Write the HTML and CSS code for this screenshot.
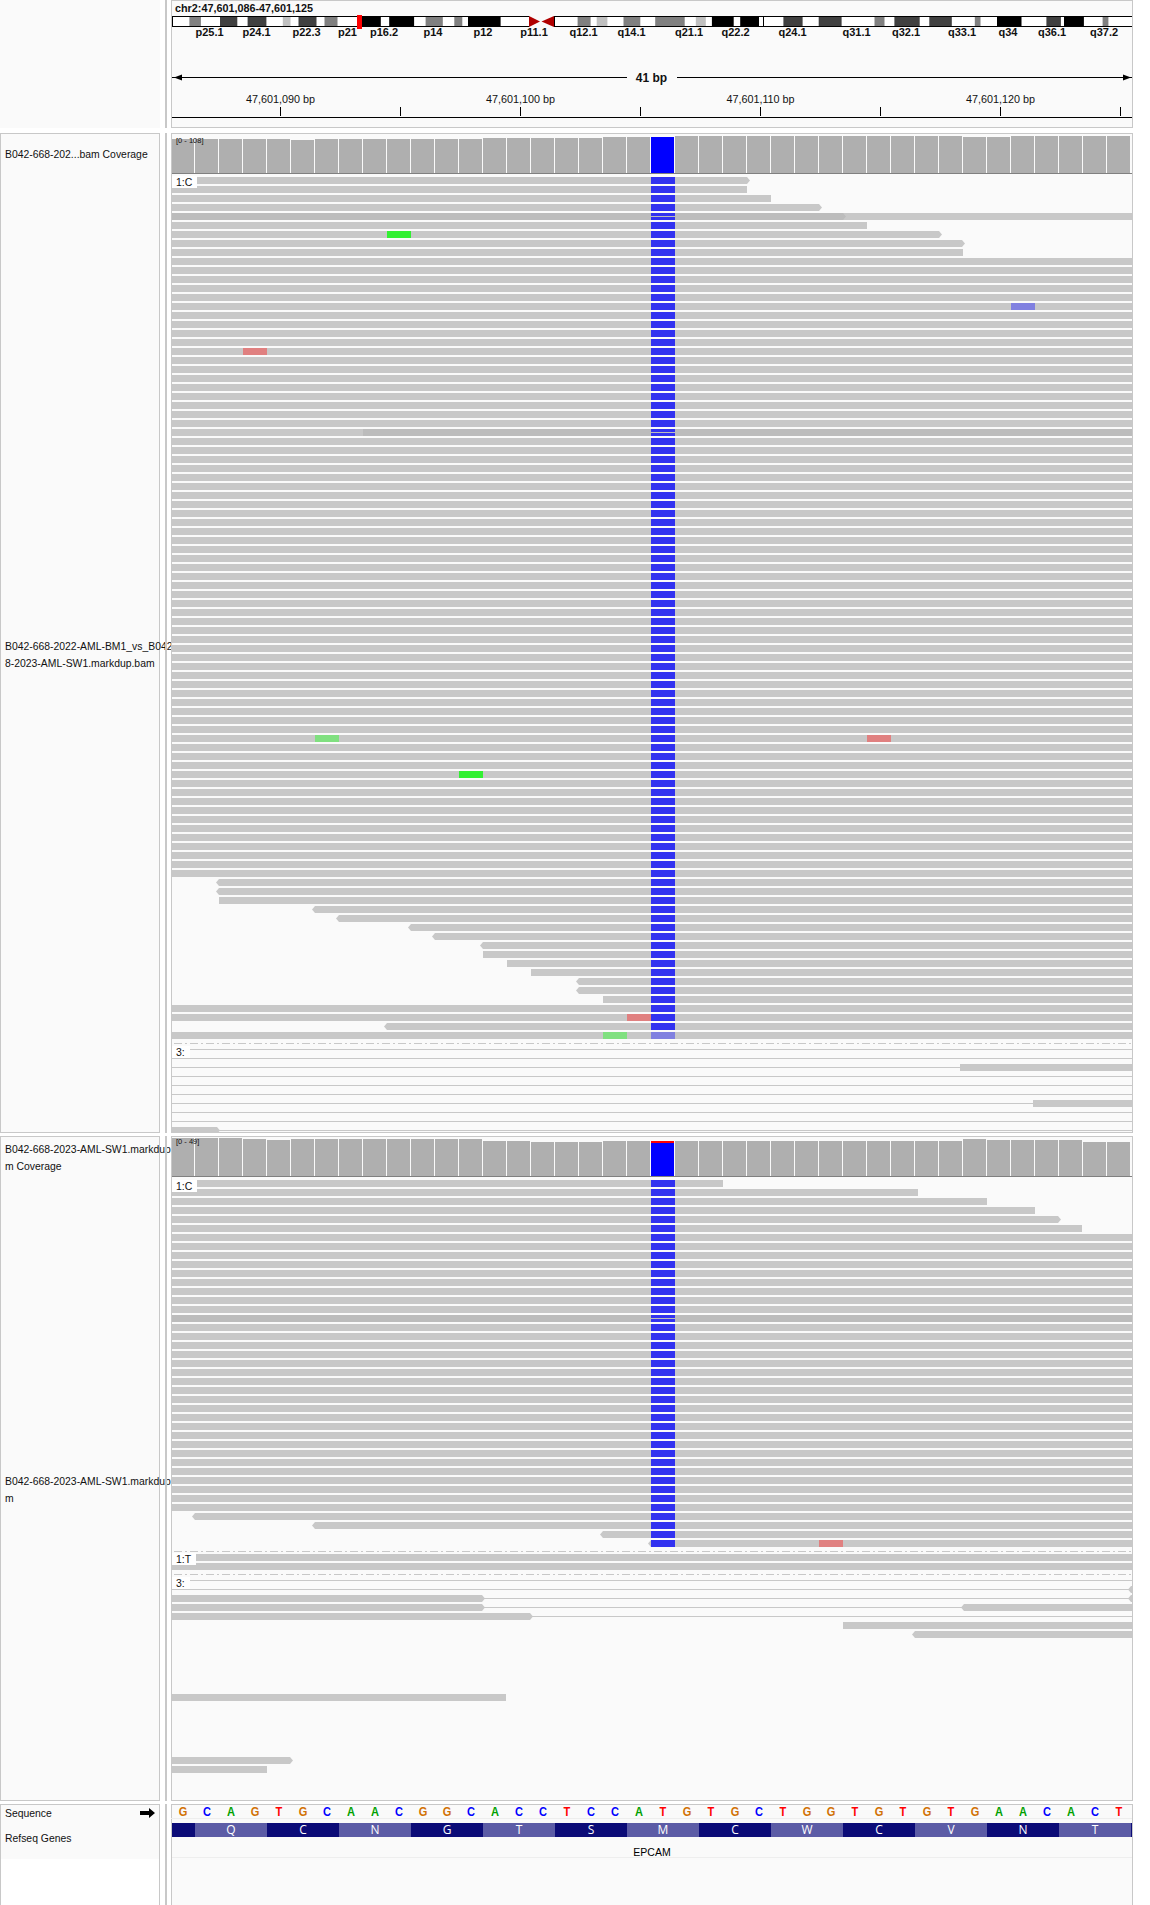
FILE: index.html
```html
<!DOCTYPE html>
<html lang="en">
  <head>
    <meta charset="UTF-8" />
    <title>IGV - EPCAM</title>
    <link rel="stylesheet" href="styles.css">
  </head>
  <body>
    <!-- Locus header: ideogram, scale and ruler -->
    <div class="row row-header">
      <div class="names names-plain"></div>
      <div class="divider"></div>
      <div class="data">
        <div class="locus">chr2:47,601,086-47,601,125</div>
        <svg id="header-track" class="canvas" width="960" height="112" viewBox="172 15 960 112"></svg>
      </div>
    </div>

    <!-- First sample -->
    <div class="row row-sample-one">
      <div class="names">
        <div class="name name-coverage">B042-668-202...bam Coverage</div>
        <div class="name name-reads">B042-668-2022-AML-BM1_vs_B042<br>8-2023-AML-SW1.markdup.bam</div>
      </div>
      <div class="divider"></div>
      <div class="data">
        <svg id="sample-one" class="canvas" width="960" height="998" viewBox="172 134 960 998"></svg>
      </div>
    </div>

    <!-- Second sample -->
    <div class="row row-sample-two">
      <div class="names">
        <div class="name name-coverage">B042-668-2023-AML-SW1.markdup<br>m Coverage</div>
        <div class="name name-reads">B042-668-2023-AML-SW1.markdup<br>m</div>
      </div>
      <div class="divider"></div>
      <div class="data">
        <svg id="sample-two" class="canvas" width="960" height="663" viewBox="172 1137 960 663"></svg>
      </div>
    </div>

    <!-- Sequence and genes -->
    <div class="row row-genes">
      <div class="names names-genes">
        <div class="gene-names">
          <div class="name-sequence">
            <span>Sequence</span>
            <svg class="strand-arrow" width="15" height="10" viewBox="0 0 15 10">
              <path d="M0 3H9V0L15 5L9 10V7H0Z" />
            </svg>
          </div>
          <div class="name-refseq">Refseq Genes</div>
        </div>
      </div>
      <div class="divider"></div>
      <div class="data">
        <div id="sequence" class="sequence"></div>
        <div id="codons" class="codons"></div>
        <div class="gene">EPCAM</div>
      </div>
    </div>

    <script src="track.js"></script>
  </body>
</html>
```

FILE: styles.css
```css
body {
  margin: 0;
  width: 1150px;
  height: 1905px;
  overflow: hidden;
  background-color: #fff;
  font-family: "Liberation Sans", Arial, sans-serif;
  font-size: 10.4px;
  color: #111;
}

.row {
  display: flex;
}
.row-header {
  height: 128px;
  margin-bottom: 5px;
}
.row-sample-one {
  height: 1000px;
  margin-bottom: 3px;
}
.row-sample-two {
  height: 665px;
  margin-bottom: 3px;
}
.row-genes {
  height: 101px;
}
.row-genes .data {
  border-bottom: none;
}
.row-genes .names {
  border-bottom: none;
}

.names {
  box-sizing: border-box;
  width: 160px;
  border: 1px solid #c8c8c8;
  background-color: #fafafa;
  display: flex;
  flex-direction: column;
}
.names-plain {
  border: none;
}
.names-genes {
  background-color: #fff;
}

.name {
  box-sizing: border-box;
  padding-left: 4px;
  white-space: nowrap;
  line-height: 17px;
  display: flex;
  align-items: center;
}
.name-coverage {
  height: 40px;
  padding-top: 1px;
}
.name-reads {
  flex: 1;
  padding-top: 3px;
}

.gene-names {
  box-sizing: border-box;
  height: 54px;
  background-color: #fafafa;
  padding: 3px 4px 0;
}
.name-sequence {
  display: flex;
  justify-content: space-between;
  align-items: center;
  height: 10px;
}
.strand-arrow {
  fill: #000;
}
.name-refseq {
  margin-top: 15px;
}

.divider {
  width: 2px;
  margin: 0 4px 0 5px;
  background-color: #c8c8c8;
}

/* position: relative so the panel paints over long sample names */
.data {
  position: relative;
  box-sizing: border-box;
  width: 962px;
  border: 1px solid #c8c8c8;
  background-color: #fafafa;
}

.canvas {
  display: block;
}
.canvas text {
  font-family: "Liberation Sans", Arial, sans-serif;
  fill: #111;
}
.crisp {
  shape-rendering: crispEdges;
}

.locus {
  height: 14px;
  line-height: 14px;
  padding-left: 3px;
  font-size: 10.8px;
  font-weight: bold;
}

/* ideogram */
.band-white { fill: #fff; }
.band-black { fill: #000; }
.band-dark { fill: #404040; }
.band-gray { fill: #808080; }
.band-light { fill: #c0c0c0; }
.band-mark { fill: #f00; }
.centromere { fill: #b00000; }
.outline { fill: none; stroke: #000; stroke-width: 1; }
.canvas text.cyto-label { font-size: 11px; font-weight: bold; text-anchor: middle; }

/* scale and ruler */
.ink { fill: #000; }
.scale-gap { fill: #fafafa; }
.canvas text.scale-label { font-size: 12px; font-weight: bold; text-anchor: middle; }
.canvas text.ruler-label { font-size: 10.8px; text-anchor: middle; }

/* coverage */
.cov { fill: #afafaf; }
.cov-blue { fill: #00f; }
.cov-red { fill: #f00; }
.cov-base { fill: #808080; }
.canvas text.range-label { font-size: 7.5px; }

/* reads */
.read { fill: #c8c8c8; }
.read-dark { fill: #bcbcbc; }
.mis-blue { fill: #3232f0; }
.mis-blue-faint { fill: #8080e0; }
.mis-green { fill: #32f032; }
.mis-green-faint { fill: #80e080; }
.mis-red-faint { fill: #e08080; }
.mate-line { fill: #c8c8c8; }
.group-line { stroke: #c8c8c8; stroke-width: 1; stroke-dasharray: 8 3 2 3; }
.group-tag { fill: #fff; }
.canvas text.group-label { font-size: 10.5px; }

/* sequence and genes */
.sequence {
  display: flex;
  height: 13px;
  margin-left: -1px;
  border-bottom: 1px solid #eee;
  margin-bottom: 4px;
}
.base {
  width: 24px;
  flex: none;
  text-align: center;
  font-size: 13px;
  line-height: 14px;
  font-weight: bold;
  transform: scaleX(0.85);
}
.base-G { color: #d17105; }
.base-C { color: #00f; }
.base-A { color: #00a000; }
.base-T { color: #f00; }

.codons {
  display: flex;
  height: 14px;
  background-color: #0c0c78;
}
.codon {
  flex: none;
  text-align: center;
  color: #fff;
  font-family: "Open Sans", sans-serif;
  font-size: 12px;
  line-height: 14px;
}
.codon-dark { background-color: #0c0c78; }
.codon-light { background-color: #5c5ca6; }

.gene {
  box-sizing: border-box;
  height: 21px;
  border-bottom: 1px solid #eee;
  padding-top: 8px;
  line-height: 14px;
  text-align: center;
  font-size: 10.5px;
  color: #000;
}
```

FILE: track.js
```js
const SVG_NS = "http://www.w3.org/2000/svg";
const LEFT = 171;
const RIGHT = 1132;
const BASE_W = 24;
const ROW_PITCH = 9;
const READ_H = 7;

function add(svg, tag, attrs, text) {
  const el = document.createElementNS(SVG_NS, tag);
  for (const key in attrs) el.setAttribute(key, attrs[key]);
  if (text) el.textContent = text;
  svg.appendChild(el);
  return el;
}

function box(svg, x1, y, x2, h, cls) {
  add(svg, "rect", { x: x1, y: y, width: x2 - x1, height: h, class: "crisp " + cls });
}

// ---- ideogram, scale, ruler ----
const bands = [
  [189.4, 200.9, "gray"], [220, 237.3, "dark"], [247.6, 266.4, "dark"], [282.8, 290.5, "light"],
  [298.5, 316.5, "dark"], [324.5, 337.5, "gray"], [362, 380.8, "black"], [389.2, 414.1, "black"],
  [425.6, 442.8, "gray"], [454.3, 462.3, "gray"], [468, 500.6, "black"], [577.6, 590.6, "gray"],
  [596.7, 607.4, "light"], [623.5, 640.3, "gray"], [655.2, 684.7, "gray"], [695.8, 705.8, "light"],
  [711.9, 733.7, "black"], [740.2, 759, "black"], [763, 764, "black"], [783.4, 802.6, "dark"],
  [818.7, 841.6, "dark"], [874.5, 884.5, "gray"], [894.4, 919.7, "dark"], [929.3, 951.8, "dark"],
  [974.8, 980.5, "gray"], [997, 1021.5, "black"], [1046.4, 1060.9, "dark"], [1064, 1083.9, "black"],
  [1102.6, 1108.4, "gray"],
];
const cytoLabels = [
  ["p25.1", 209.5], ["p24.1", 256.5], ["p22.3", 306.5], ["p21", 347.5], ["p16.2", 384], ["p14", 433],
  ["p12", 483], ["p11.1", 534], ["q12.1", 583.5], ["q14.1", 631.5], ["q21.1", 689], ["q22.2", 735.5],
  ["q24.1", 792.5], ["q31.1", 856.5], ["q32.1", 906], ["q33.1", 962], ["q34", 1008], ["q36.1", 1052],
  ["q37.2", 1104],
];

function drawHeader(svg) {
  box(svg, 172, 16, 529, 11, "band-white");
  box(svg, 554, 16, 1132, 11, "band-white");
  bands.forEach((b) => add(svg, "rect", { x: b[0], y: 17, width: b[1] - b[0], height: 10, class: "band-" + b[2] }));
  add(svg, "path", { d: "M172.5 26.5V16.5H529M554 16.5H1132M172.5 26.5H529M554 26.5H1132M554.5 16.5V26.5", class: "outline crisp" });
  add(svg, "path", { d: "M529 16L540 21.5L529 27Z", class: "centromere" });
  add(svg, "path", { d: "M554 16L541.5 21.5L554 27Z", class: "centromere" });
  box(svg, 357, 14, 362, 15, "band-mark");
  cytoLabels.forEach((l) => add(svg, "text", { x: l[1], y: 36, class: "cyto-label" }, l[0]));

  // scale bar
  box(svg, 172, 77, 1132, 1, "ink");
  add(svg, "path", { d: "M174 77.5L182 74.5V80.5Z", class: "ink" });
  add(svg, "path", { d: "M1131 77.5L1123 74.5V80.5Z", class: "ink" });
  box(svg, 627, 70, 677, 15, "scale-gap");
  add(svg, "text", { x: 651.5, y: 82, class: "scale-label" }, "41 bp");

  // ruler
  box(svg, 171, 117, 1132, 1, "ink");
  for (let i = 0; i < 8; i++) {
    box(svg, 280 + i * 120, 107, 281 + i * 120, 9, "ink");
    if (i % 2 === 0) {
      const label = "47,601," + (90 + i * 5).toString().padStart(3, "0") + " bp";
      add(svg, "text", { x: 280.5 + i * 120, y: 102.5, class: "ruler-label" }, label);
    }
  }
}

// ---- tracks ----
function drawCoverage(svg, tops, bottom, range, rangeY, capRed) {
  tops.forEach((top, i) => {
    const x = LEFT + i * BASE_W;
    box(svg, x, top, x + BASE_W - 1, bottom - top, i === 20 ? "cov-blue" : "cov");
  });
  if (capRed) box(svg, 651, tops[20], 674, 2, "cov-red");
  box(svg, LEFT, bottom, RIGHT, 1, "cov-base");
  add(svg, "text", { x: 176, y: rangeY, class: "range-label" }, range);
}

function drawRead(svg, y, x1, x2, dir, cls) {
  const c = cls || "read";
  const mid = y + READ_H / 2;
  let d;
  if (dir === "R") {
    d = `M${x1} ${y}H${x2 - 3}L${x2} ${mid}L${x2 - 3} ${y + READ_H}H${x1}Z`;
  } else if (dir === "L") {
    d = `M${x2} ${y}H${x1 + 3}L${x1} ${mid}L${x1 + 3} ${y + READ_H}H${x2}Z`;
  } else {
    d = `M${x1} ${y}H${x2}V${y + READ_H}H${x1}Z`;
  }
  add(svg, "path", { d: d, class: c });
}

function drawGroupLine(svg, y) {
  add(svg, "line", { x1: 174, x2: RIGHT, y1: y + 0.5, y2: y + 0.5, class: "group-line crisp" });
}

function drawGroupTag(svg, x2, y, h, label) {
  box(svg, LEFT, y, x2, h, "group-tag");
  add(svg, "text", { x: 176, y: y + h / 2 + 4, class: "group-label" }, label);
}

// rows: index -> [x1, x2, dir], anything missing is a full width read
function drawPileup(svg, top, count, rows, dark, mismatches, faintBlue) {
  for (let i = 0; i < count; i++) {
    const y = top + i * ROW_PITCH;
    const r = rows[i] || [LEFT, RIGHT, null];
    drawRead(svg, y, r[0], r[1], r[2]);
    if (dark[i]) drawRead(svg, y, dark[i][0], dark[i][1], dark[i][2], "read-dark");
    box(svg, 651, y, 675, READ_H, faintBlue === i ? "mis-blue-faint" : "mis-blue");
    if (dark[i]) box(svg, 651, y + 3, 675, 1, "read-dark");
  }
  mismatches.forEach((m) => {
    const x = LEFT + m[1] * BASE_W;
    box(svg, x, top + m[0] * ROW_PITCH, x + BASE_W, READ_H, m[2]);
  });
}

function drawMateLines(svg, top, count, start) {
  for (let k = 0; k < count; k++) {
    box(svg, k === 0 ? start : LEFT, top + k * ROW_PITCH, RIGHT, 1, "mate-line");
  }
}

function drawSampleOne(svg) {
  const tops = [139, 139, 139, 139, 139, 140, 139, 139, 139, 139, 139, 139, 139, 138, 138, 138, 138, 138, 137, 137,
    137, 136, 136, 136, 136, 136, 136, 136, 136, 136, 136, 136, 136, 137, 137, 136, 136, 136, 136, 136];
  drawCoverage(svg, tops, 173, "[0 - 108]", 143, false);

  const rows = {
    0: [LEFT, 750, "R"], 1: [LEFT, 747], 2: [LEFT, 771], 3: [LEFT, 822, "R"], 5: [LEFT, 867],
    6: [LEFT, 942, "R"], 7: [LEFT, 965, "R"], 8: [LEFT, 963],
    78: [216, RIGHT, "L"], 79: [216, RIGHT, "L"], 80: [219, RIGHT], 81: [312, RIGHT, "L"],
    82: [336, RIGHT, "L"], 83: [408, RIGHT, "L"], 84: [432, RIGHT, "L"], 85: [480, RIGHT, "L"],
    86: [483, RIGHT], 87: [507, RIGHT], 88: [531, RIGHT], 89: [576, RIGHT, "L"],
    90: [576, RIGHT, "L"], 91: [603, RIGHT], 94: [384, RIGHT, "L"],
  };
  const dark = { 4: [LEFT, 846, "R"], 28: [363, RIGHT] };
  const mismatches = [
    [6, 9, "mis-green"], [14, 35, "mis-blue-faint"], [19, 3, "mis-red-faint"],
    [62, 6, "mis-green-faint"], [62, 29, "mis-red-faint"], [66, 12, "mis-green"],
    [93, 19, "mis-red-faint"], [95, 18, "mis-green-faint"],
  ];
  drawPileup(svg, 177, 96, rows, dark, mismatches, 95);
  drawGroupTag(svg, 197, 176, 12, "1:C");

  drawGroupLine(svg, 1043);
  drawMateLines(svg, 1049, 10, 190);
  drawRead(svg, 1064, 960, RIGHT);
  drawRead(svg, 1100, 1033, RIGHT);
  drawRead(svg, 1127, LEFT, 220, "R");
  drawGroupTag(svg, 190, 1046, 12, "3:");
}

function drawSampleTwo(svg) {
  const tops = [1138, 1138, 1138, 1139, 1140, 1139, 1139, 1139, 1139, 1139, 1139, 1139, 1139, 1141, 1141, 1142, 1142, 1142, 1141, 1141,
    1141, 1141, 1141, 1141, 1141, 1141, 1141, 1141, 1141, 1141, 1141, 1141, 1141, 1139, 1140, 1140, 1140, 1140, 1142, 1142];
  drawCoverage(svg, tops, 1176, "[0 - 49]", 1144, true);

  const rows = {
    0: [LEFT, 723], 1: [LEFT, 918], 2: [LEFT, 987], 3: [LEFT, 1035], 4: [LEFT, 1061, "R"], 5: [LEFT, 1082],
    37: [192, RIGHT, "L"], 38: [312, RIGHT, "L"], 39: [600, RIGHT, "L"], 40: [648, RIGHT, "L"],
  };
  drawPileup(svg, 1180, 41, rows, { 15: [LEFT, RIGHT] }, [[40, 27, "mis-red-faint"]]);
  drawGroupTag(svg, 197, 1180, 12, "1:C");

  drawGroupLine(svg, 1551);
  drawRead(svg, 1554, LEFT, RIGHT);
  drawRead(svg, 1563, LEFT, RIGHT);
  drawGroupTag(svg, 196, 1553, 12, "1:T");

  drawGroupLine(svg, 1574);
  drawMateLines(svg, 1580, 5, 190);
  drawRead(svg, 1586, 1128, RIGHT, "L");
  drawRead(svg, 1595, 1128, RIGHT, "L");
  drawRead(svg, 1595, LEFT, 485, "R");
  drawRead(svg, 1604, LEFT, 485, "R");
  drawRead(svg, 1604, 961, RIGHT, "L");
  drawRead(svg, 1613, LEFT, 533, "R");
  drawRead(svg, 1622, 843, RIGHT);
  drawRead(svg, 1631, 912, RIGHT, "L");
  drawRead(svg, 1694, LEFT, 506);
  drawRead(svg, 1757, LEFT, 293, "R");
  drawRead(svg, 1766, LEFT, 267);
  drawGroupTag(svg, 190, 1577, 12, "3:");
}

// ---- sequence row and codons ----
function drawSequence() {
  const seq = "GCAGTGCAACGGCACCTCCATGTGCTGGTGTGTGAACACT";
  const row = document.getElementById("sequence");
  seq.split("").forEach((b) => {
    const span = document.createElement("span");
    span.className = "base base-" + b;
    span.textContent = b;
    row.appendChild(span);
  });
}

function drawCodons() {
  const aminoAcids = " QCNGTSMCWCVNT";
  const row = document.getElementById("codons");
  aminoAcids.split("").forEach((aa, i) => {
    const cell = document.createElement("span");
    cell.className = "codon " + (i % 2 === 0 ? "codon-dark" : "codon-light");
    cell.style.width = (i === 0 ? 23 : 72) + "px";
    cell.textContent = aa;
    row.appendChild(cell);
  });
}

drawHeader(document.getElementById("header-track"));
drawSampleOne(document.getElementById("sample-one"));
drawSampleTwo(document.getElementById("sample-two"));
drawSequence();
drawCodons();
```
